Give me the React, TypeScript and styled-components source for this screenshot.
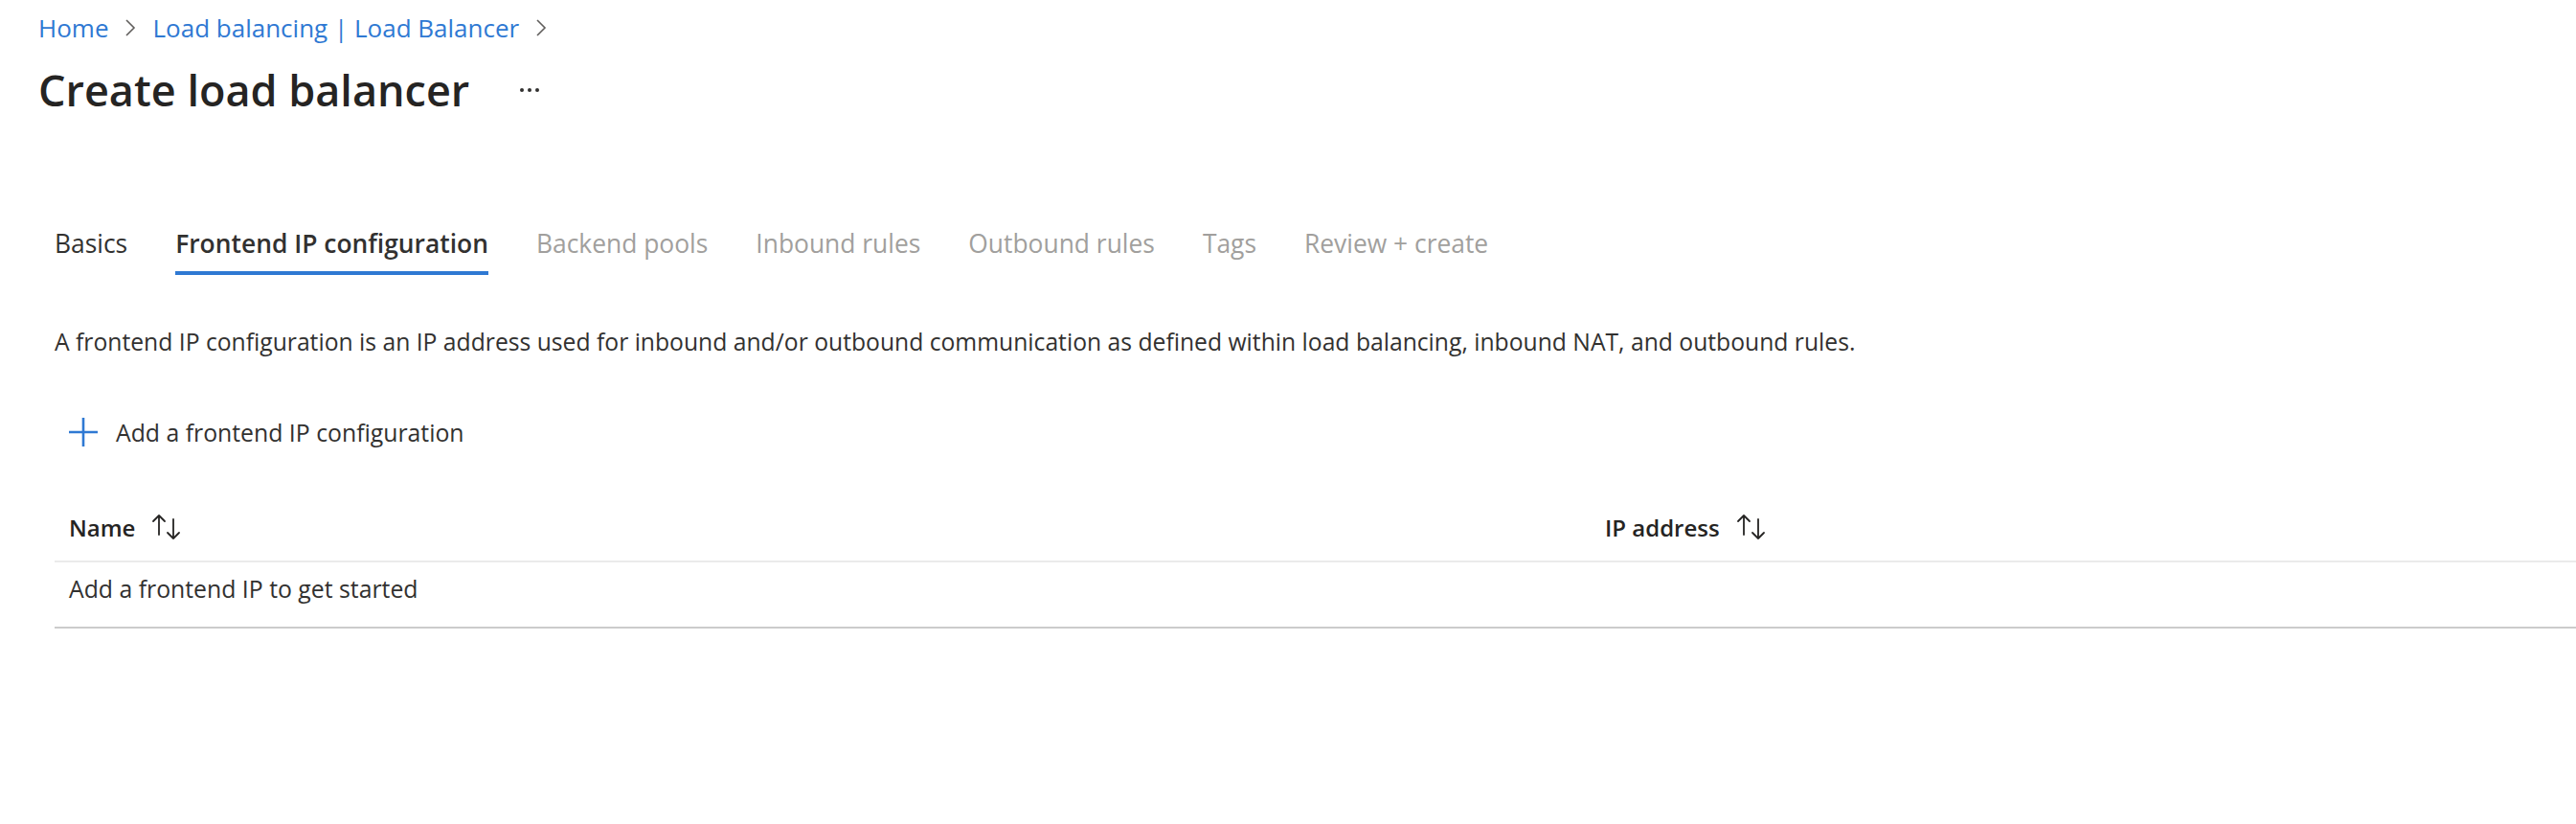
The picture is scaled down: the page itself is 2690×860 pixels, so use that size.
import React from "react";
import styled, { createGlobalStyle } from "styled-components";

const GlobalStyle = createGlobalStyle`
  html, body { margin: 0; padding: 0; background: #ffffff; }
  body { font-family: "Open Sans", "Noto Sans", sans-serif; color: #323130; }
  * { box-sizing: border-box; }
`;

const BLUE = "#2f79d3";

const Page = styled.div`
  width: 2690px;
  height: 860px;
  padding-left: 40px;
  overflow: hidden;
  display: flex;
  flex-direction: column;
`;

const Breadcrumb = styled.nav`
  display: flex;
  align-items: center;
  gap: 17px;
  height: 58px;
  font-size: 26px;
`;

const Crumb = styled.a`
  color: ${BLUE};
  text-decoration: none;
  line-height: 36px;
`;

const Chevron = styled.svg`
  width: 12px;
  height: 20px;
  flex: none;
`;

const TitleRow = styled.div`
  display: flex;
  align-items: center;
  gap: 46px;
  height: 72px;
`;

const Title = styled.h1`
  margin: 0;
  font-size: 45px;
  font-weight: 600;
  line-height: 60px;
  color: #252423;
`;

const MoreButton = styled.button`
  border: none;
  background: transparent;
  padding: 0 6px;
  display: flex;
  align-items: center;
  height: 40px;
`;

const Body = styled.div`
  margin-left: 17px;
  display: flex;
  flex-direction: column;
`;

const TabBar = styled.div`
  display: flex;
  gap: 50px;
  margin-top: 104px;
`;

const Tab = styled.div<{ $active?: boolean; $disabled?: boolean }>`
  font-size: 26.4px;
  line-height: 40px;
  padding-bottom: 9px;
  border-bottom: 4px solid ${(p) => (p.$active ? BLUE : "transparent")};
  font-weight: ${(p) => (p.$active ? 600 : 400)};
  color: ${(p) => (p.$disabled ? "#a19f9d" : "#323130")};
  white-space: nowrap;
`;

const Description = styled.p`
  margin: 52px 0 0;
  font-size: 24.7px;
  line-height: 36px;
  color: #323130;
  white-space: nowrap;
`;

const AddButton = styled.button`
  margin-top: 51px;
  align-self: flex-start;
  display: flex;
  align-items: center;
  gap: 19px;
  height: 50px;
  padding: 0 0 0 15px;
  border: none;
  background: transparent;
  font-family: inherit;
  font-size: 24.8px;
  color: #323130;
`;

const Table = styled.div`
  margin-top: 39px;
  margin-right: -40px;
  display: flex;
  flex-direction: column;
`;

const HeaderRow = styled.div`
  display: grid;
  grid-template-columns: 1604px 1fr;
  height: 72px;
  align-items: center;
  border-bottom: 2px solid #ebebeb;
`;

const HeaderCell = styled.div`
  display: flex;
  align-items: center;
  gap: 16px;
  padding-left: 15px;
  font-size: 24px;
  font-weight: 600;
  color: #252423;
`;

const BodyRow = styled.div`
  display: grid;
  grid-template-columns: 1604px 1fr;
  padding: 8px 0 21px;
  border-bottom: 2px solid #cccccc;
`;

const Cell = styled.div`
  padding-left: 15px;
  font-size: 24.8px;
  line-height: 38px;
  color: #323130;
`;

const ChevronIcon = () => (
  <Chevron viewBox="0 0 12 20">
    <path d="M2 2 L10 10 L2 18" fill="none" stroke="#605e5c" strokeWidth="1.6" />
  </Chevron>
);

const MoreIcon = () => (
  <svg width="22" height="6" viewBox="0 0 22 6">
    <circle cx="3" cy="3" r="2" fill="#323130" />
    <circle cx="11" cy="3" r="2" fill="#323130" />
    <circle cx="19" cy="3" r="2" fill="#323130" />
  </svg>
);

const PlusIcon = () => (
  <svg width="30" height="30" viewBox="0 0 30 30">
    <path d="M15 0 V30 M0 15 H30" stroke={BLUE} strokeWidth="2.6" fill="none" />
  </svg>
);

const SortIcon = () => (
  <svg width="34" height="30" viewBox="0 0 34 30">
    <g fill="none" stroke="#252423" strokeWidth="1.8" strokeLinecap="round" strokeLinejoin="round">
      <path d="M9 23 V3 M3 9 L9 3 L15 9" />
      <path d="M24 7 V27 M18 21 L24 27 L30 21" />
    </g>
  </svg>
);

const tabs = [
  { label: "Basics" },
  { label: "Frontend IP configuration", active: true },
  { label: "Backend pools", disabled: true },
  { label: "Inbound rules", disabled: true },
  { label: "Outbound rules", disabled: true },
  { label: "Tags", disabled: true },
  { label: "Review + create", disabled: true },
];

export default function App() {
  return (
    <>
      <GlobalStyle />
      <Page>
        <Breadcrumb>
          <Crumb>Home</Crumb>
          <ChevronIcon />
          <Crumb>Load balancing | Load Balancer</Crumb>
          <ChevronIcon />
        </Breadcrumb>
        <TitleRow>
          <Title>Create load balancer</Title>
          <MoreButton aria-label="More">
            <MoreIcon />
          </MoreButton>
        </TitleRow>
        <Body>
          <TabBar>
            {tabs.map((t) => (
              <Tab key={t.label} $active={t.active} $disabled={t.disabled}>
                {t.label}
              </Tab>
            ))}
          </TabBar>
          <Description>
            A frontend IP configuration is an IP address used for inbound and/or outbound communication as defined within load balancing, inbound NAT, and outbound rules.
          </Description>
          <AddButton>
            <PlusIcon />
            Add a frontend IP configuration
          </AddButton>
          <Table>
            <HeaderRow>
              <HeaderCell>
                Name <SortIcon />
              </HeaderCell>
              <HeaderCell>
                IP address <SortIcon />
              </HeaderCell>
            </HeaderRow>
            <BodyRow>
              <Cell>Add a frontend IP to get started</Cell>
              <Cell />
            </BodyRow>
          </Table>
        </Body>
      </Page>
    </>
  );
}
